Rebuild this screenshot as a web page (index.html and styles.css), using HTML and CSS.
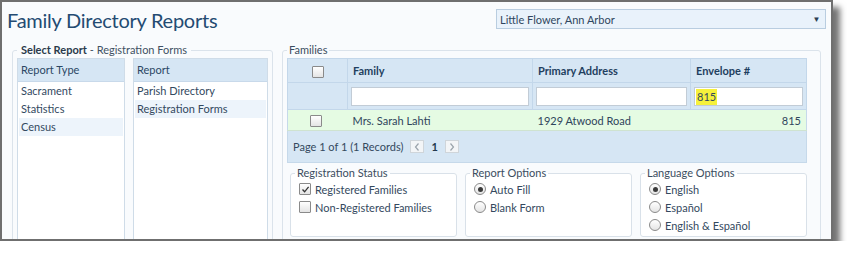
FILE: index.html
```html
<!DOCTYPE html>
<html lang="en">
<head>
    <meta charset="UTF-8">
    <title>Family Directory Reports</title>
    <link rel="stylesheet" href="styles.css">
</head>
<body>
    <div class="window">
        <div class="top">
            <h1 class="title">Family Directory Reports</h1>
            <div class="site-select">
                <span class="site-name">Little Flower, Ann Arbor</span>
                <span class="site-arrow">&#9660;</span>
            </div>
        </div>

        <div class="main">
            <!-- report picker -->
            <fieldset class="box pick">
                <legend><strong>Select Report</strong> - Registration Forms</legend>
                <div class="panels">
                    <div class="panel type-panel">
                        <div class="panel-head">Report Type</div>
                        <ul class="panel-list">
                            <li>Sacrament</li>
                            <li>Statistics</li>
                            <li class="active">Census</li>
                        </ul>
                    </div>
                    <div class="panel report-panel">
                        <div class="panel-head">Report</div>
                        <ul class="panel-list">
                            <li>Parish Directory</li>
                            <li class="active">Registration Forms</li>
                        </ul>
                    </div>
                </div>
            </fieldset>

            <!-- families grid -->
            <fieldset class="box families">
                <legend>Families</legend>
                <table class="grid">
                    <colgroup>
                        <col class="c-check">
                        <col class="c-family">
                        <col class="c-address">
                        <col class="c-env">
                    </colgroup>
                    <tr class="head-row">
                        <th class="check-cell"><span class="cb"></span></th>
                        <th>Family</th>
                        <th>Primary Address</th>
                        <th>Envelope #</th>
                    </tr>
                    <tr class="filter-row">
                        <td></td>
                        <td><div class="filter"></div></td>
                        <td><div class="filter"></div></td>
                        <td><div class="filter"><span class="hit">815</span></div></td>
                    </tr>
                    <tr class="data-row">
                        <td class="check-cell"><span class="cb"></span></td>
                        <td>Mrs. Sarah Lahti</td>
                        <td>1929 Atwood Road</td>
                        <td class="num">815</td>
                    </tr>
                    <tr class="pager-row">
                        <td colspan="4">
                            <div class="pager">
                                <span>Page 1 of 1 (1 Records)</span>
                                <span class="page-btn"><svg width="6" height="8" viewBox="0 0 6 8"><path d="M4.5 0.5 L1.5 4 L4.5 7.5" fill="none" stroke="#9aa3ab" stroke-width="1.2"/></svg></span>
                                <strong class="page-num">1</strong>
                                <span class="page-btn"><svg width="6" height="8" viewBox="0 0 6 8"><path d="M1.5 0.5 L4.5 4 L1.5 7.5" fill="none" stroke="#9aa3ab" stroke-width="1.2"/></svg></span>
                            </div>
                        </td>
                    </tr>
                </table>

                <div class="options">
                    <fieldset class="opt">
                        <legend>Registration Status</legend>
                        <div class="opt-item"><span class="cb checked"><svg width="9" height="9" viewBox="0 0 9 9"><path d="M1.5 4.5 L3.6 6.8 L7.6 1.8" fill="none" stroke="#333" stroke-width="1.3"/></svg></span>Registered Families</div>
                        <div class="opt-item"><span class="cb"></span>Non-Registered Families</div>
                    </fieldset>
                    <fieldset class="opt">
                        <legend>Report Options</legend>
                        <div class="opt-item"><span class="rb on"></span>Auto Fill</div>
                        <div class="opt-item"><span class="rb"></span>Blank Form</div>
                    </fieldset>
                    <fieldset class="opt">
                        <legend>Language Options</legend>
                        <div class="opt-item"><span class="rb on"></span>English</div>
                        <div class="opt-item"><span class="rb"></span>Español</div>
                        <div class="opt-item"><span class="rb"></span>English &amp; Español</div>
                    </fieldset>
                </div>
            </fieldset>
        </div>
    </div>
</body>
</html>
```

FILE: styles.css
```css
body {
    margin: 0;
    background: #fff;
    font-family: Lato, "Liberation Sans", Arial, sans-serif;
    font-size: 11px;
    color: #34495e;
}
.window {
    width: 829px;
    height: 237px;
    border: 2px solid #6f6f6f;
    background: #f9fbfd;
    overflow: hidden;
    box-shadow: 7px 7px 6px rgba(0,0,0,0.55);
}

/* top bar */
.top {
    display: flex;
    justify-content: space-between;
    align-items: flex-start;
    height: 41px;
    padding: 0 5px 0 5px;
}
.title {
    margin: 3px 0 0 0;
    font-size: 20px;
    font-weight: normal;
    line-height: 30px;
    letter-spacing: -0.25px;
    color: #244b72;
}
.site-select {
    margin-top: 7px;
    width: 330px;
    height: 20px;
    box-sizing: border-box;
    border: 1px solid #b9cde0;
    background: #e9f2fb;
    display: flex;
    align-items: center;
    justify-content: space-between;
    padding-left: 3px;
    color: #2f4660;
}
.site-arrow {
    width: 17px;
    text-align: center;
    font-size: 8px;
    color: #2b3e52;
}

/* main area */
.main {
    display: flex;
    align-items: flex-start;
    gap: 9px;
    padding-left: 10px;
}
.box {
    margin: 0;
    min-width: 0;
    box-sizing: border-box;
    border: 1px solid #dbe3eb;
    border-radius: 3px;
}
.box legend {
    line-height: 14px;
    font-size: 11px;
    color: #3b4d60;
}
.pick {
    width: 261px;
    height: 240px;
    padding: 1px 4px 0 4px;
}
.pick legend {
    padding: 0 4px;
    color: #3f5163;
}
.pick legend strong {
    color: #2a3a4b;
}
.panels {
    display: flex;
    gap: 8px;
}
.panel {
    height: 200px;
    border: 1px solid #cfdce8;
    background: #fff;
    box-sizing: border-box;
}
.type-panel {
    width: 108px;
}
.report-panel {
    width: 135px;
}
.panel-head {
    height: 22px;
    line-height: 22px;
    padding-left: 3px;
    background: #d6e6f4;
    border-bottom: 1px solid #c8d9ea;
    color: #2b4764;
}
.panel-list {
    list-style: none;
    margin: 0;
    padding: 0 1px;
}
.panel-list li {
    height: 18px;
    line-height: 18px;
    padding-left: 2px;
    color: #33495f;
}
.panel-list li.active {
    background: #edf4fb;
}

/* families grid */
.families {
    width: 539px;
    height: 240px;
    padding: 1px 13px 0 4px;
}
.families legend {
    padding: 0 2px;
}
.grid {
    width: 519px;
    border-collapse: collapse;
    table-layout: fixed;
    border: 1px solid #c6d9ea;
}
.c-check { width: 60px; }
.c-family { width: 185px; }
.c-address { width: 158px; }
.c-env { width: 116px; }
.grid th {
    height: 23px;
    padding: 0 5px;
    text-align: left;
    background: #d6e6f4;
    border: 1px solid #c3d7ea;
    color: #1f3f5f;
    font-weight: bold;
}
.grid td {
    padding: 0 5px;
}
.grid .check-cell {
    text-align: center;
    padding: 0;
}
.filter-row td {
    height: 26px;
    background: #d6e6f4;
    border: 1px solid #c3d7ea;
    padding: 0 3px;
}
.filter {
    height: 19px;
    box-sizing: border-box;
    border: 1px solid #c2ccd6;
    background: #fff;
    padding: 1px 1px 0;
}
.hit {
    display: inline-block;
    height: 16px;
    line-height: 16px;
    padding: 0 1px;
    background: #f6f13c;
    color: #33495f;
}
.data-row td {
    height: 20px;
    background: #e5fbe3;
    border-bottom: 1px solid #cfe3d0;
    color: #2f455b;
}
.data-row .check-cell {
    padding-right: 4px;
}
.grid .num {
    text-align: right;
}
.pager-row td {
    height: 31px;
    background: #d6e6f4;
    padding-left: 5px;
}
.pager {
    display: flex;
    align-items: center;
    gap: 7px;
    color: #34495e;
}
.page-btn {
    width: 12px;
    height: 11px;
    border: 1px solid #cfd5da;
    background: #f3f5f7;
    display: flex;
    align-items: center;
    justify-content: center;
}
.page-num {
    color: #23384d;
}

/* checkboxes and radios */
.cb, .rb {
    display: inline-flex;
    align-items: center;
    justify-content: center;
    width: 10px;
    height: 10px;
    border: 1px solid #8a8a8a;
    background: linear-gradient(#ffffff, #e4e4e4);
    vertical-align: middle;
}
.cb {
    border-radius: 1px;
}
.rb {
    border-radius: 50%;
}
.rb.on::after {
    content: "";
    width: 5px;
    height: 5px;
    border-radius: 50%;
    background: #3a3a3a;
}

/* option groups */
.options {
    display: flex;
    gap: 8px;
    margin: 3px 0 0 3px;
}
.opt {
    width: 168px;
    height: 71px;
    margin: 0;
    min-width: 0;
    box-sizing: border-box;
    border: 1px solid #d9e1e9;
    border-radius: 3px;
    background: #fff;
    padding: 0 0 0 4px;
}
.opt legend {
    padding: 0 2px;
    line-height: 14px;
    font-size: 11px;
    color: #3b4d60;
}
.opt-item {
    display: flex;
    align-items: center;
    gap: 4px;
    height: 18px;
    padding-left: 4px;
    font-size: 11px;
    color: #34495e;
}
```
